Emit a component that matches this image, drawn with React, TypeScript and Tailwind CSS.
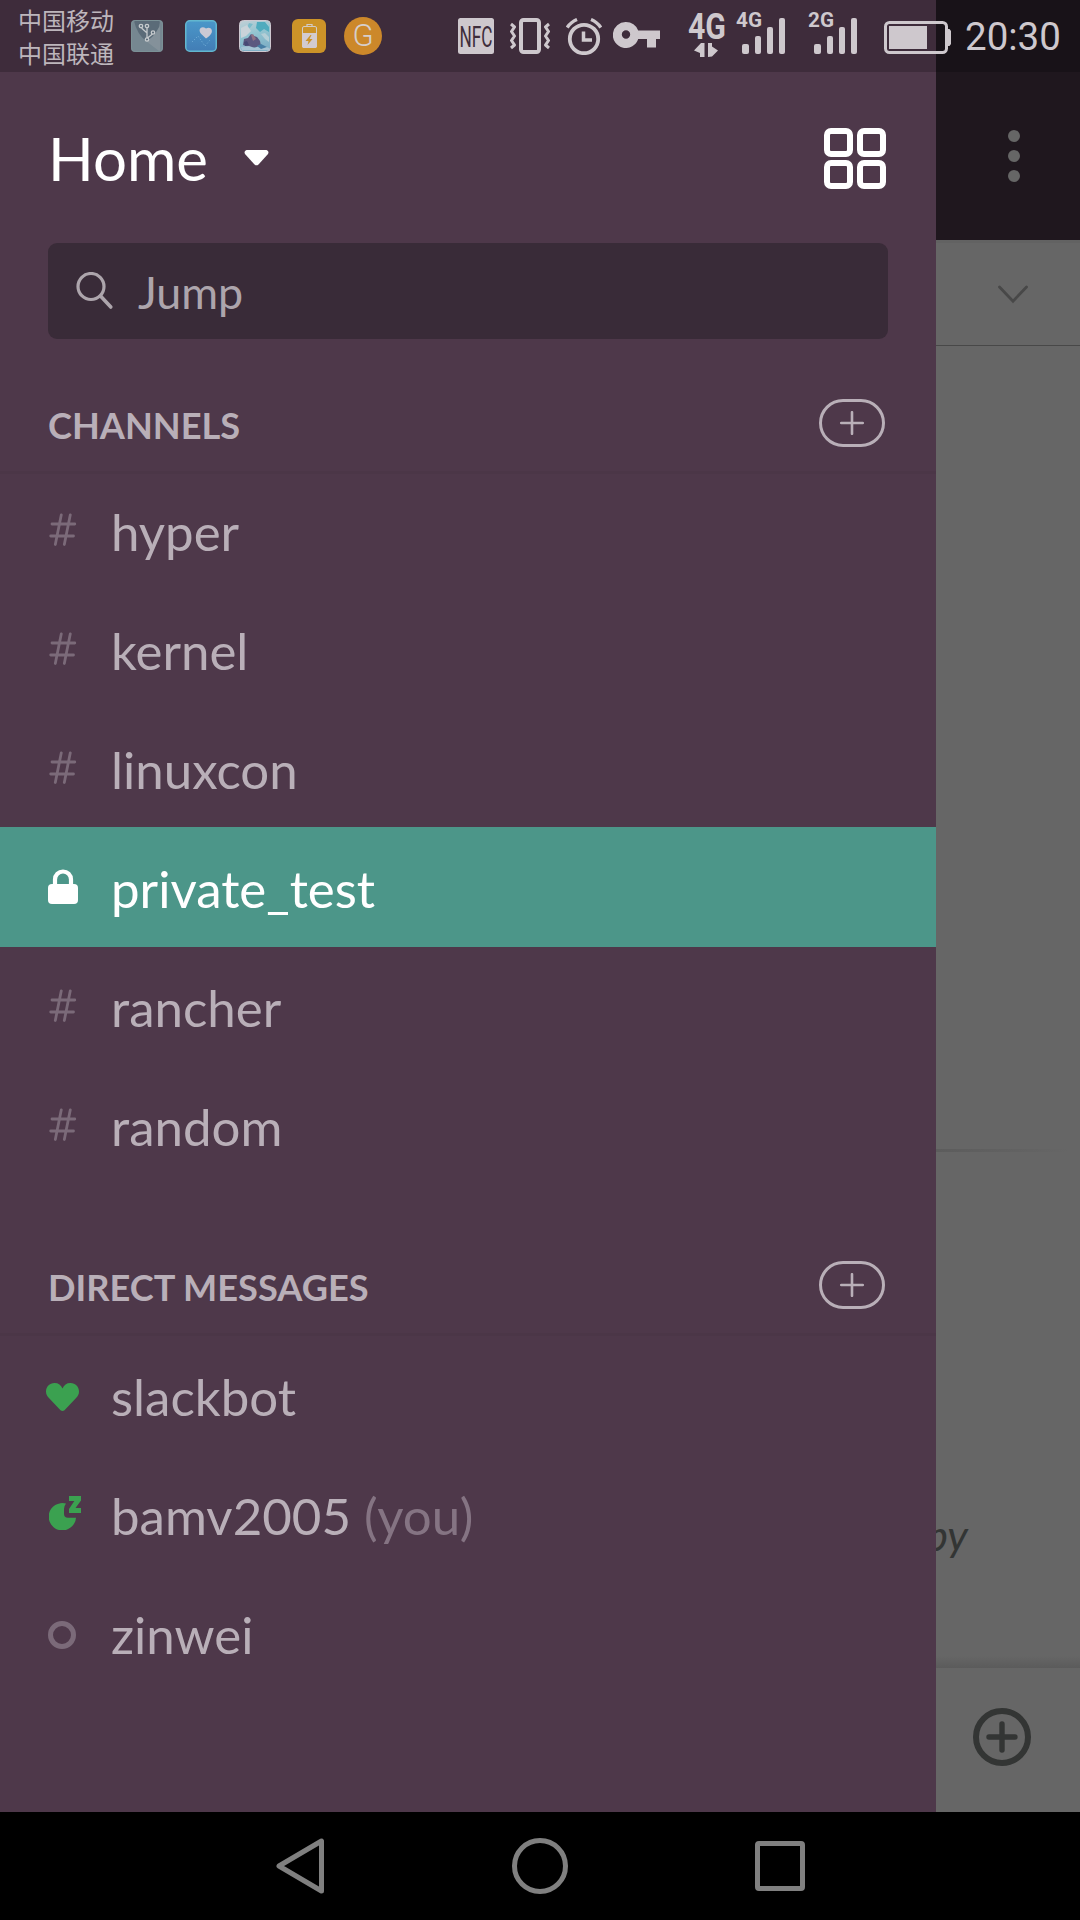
import React from "react";

const LIGHT = "#cec8cd";

function CarrierNames() {
  return (
    <div className="ml-[18px] w-[98px] font-['Noto_Sans_CJK_SC',sans-serif] text-[24px] leading-[33px] whitespace-nowrap text-[#bdb6bc]">
      <div>中国移动</div>
      <div>中国联通</div>
    </div>
  );
}

function UsbIcon() {
  return (
    <svg className="ml-[15px]" width="32" height="32" viewBox="0 0 32 32">
      <rect width="32" height="32" rx="4" fill="#768791" />
      <path d="M3 1h26L28 7Q22 19 15 21Q6 14 3 1Z" fill="#5b6b78" />
      <path d="M15 21Q22 19 29 6v25H28Z" fill="#84919a" />
      <rect x=".5" y=".5" width="31" height="31" rx="4" fill="none" stroke="#7b9196" />
      <g fill="none" stroke="#c6cacd" strokeWidth="1.3">
        <circle cx="10" cy="6" r="1.7" />
        <circle cx="16" cy="6" r="1.7" />
        <circle cx="22" cy="12.500" r="1.7" />
        <circle cx="16" cy="19.500" r="1.7" />
        <path d="M16 8v10M10.500 8l5 4.500M21.500 14l-5 4" />
      </g>
    </svg>
  );
}

function HealthIcon() {
  return (
    <svg className="ml-[22px]" width="32" height="32" viewBox="0 0 32 32">
      <defs>
        <linearGradient id="health" x2="0" y2="1">
          <stop stopColor="#4a97c9" />
          <stop offset="1" stopColor="#427db5" />
        </linearGradient>
      </defs>
      <rect x=".75" y=".75" width="30.500" height="30.500" rx="4" fill="url(#health)" stroke="#62b7cf" strokeWidth="1.500" />
      <path d="M21 18.500l-5-4.800c-3.600-4.500.5-8.400 5-5.200 4.500-2.500 7 1.500 5.500 4.500-1 2-3 4-5.500 5.500Z" fill="#cac9d4" />
      <path d="M7 22l6-6 7 10 5-6" fill="none" stroke="#78b4da" strokeWidth="1" strokeDasharray="1 2" />
    </svg>
  );
}

function GameIcon() {
  return (
    <svg className="ml-[22px]" width="32" height="32" viewBox="0 0 32 32">
      <defs>
        <linearGradient id="sky" x2=".3" y2="1">
          <stop stopColor="#c3d0d6" />
          <stop offset=".5" stopColor="#93c4d0" />
          <stop offset="1" stopColor="#7fb0c6" />
        </linearGradient>
        <filter id="haze">
          <feGaussianBlur stdDeviation=".6" />
        </filter>
      </defs>
      <rect x=".5" y=".5" width="31" height="31" rx="4" fill="url(#sky)" />
      <g filter="url(#haze)">
        <path d="M18 2h8l4 5v5l-5-3-4 3-4-4Z" fill="#4fabbe" />
        <path d="M10 3l4 1-3 4-4 2Z" fill="#7cbccb" />
        <path d="M2 8l6-3 4 6-5 5-5 2Z" fill="#c9d3d9" />
        <path d="M22 14l4-1 4 4v5l-4-3Z" fill="#b4ced6" />
        <path d="M4 25l1-6 4-1 3-4 3 2 3 1 3 4 1 5-9 2Z" fill="#5b587f" />
        <path d="M12 15l2-1 3 5-3 2Z" fill="#8f7184" />
        <path d="M5 22l3-1 2 4-4 1Z" fill="#474a74" />
        <path d="M2 27l8-1 6 2 6-3 8 3v2H3Z" fill="#a6c3d3" />
        <path d="M18 26l4-2 6 3-6 2Z" fill="#477ea5" />
      </g>
      <rect x=".5" y=".5" width="31" height="31" rx="4" fill="none" stroke="#cfc8d0" />
    </svg>
  );
}

function BatteryAppIcon() {
  return (
    <svg className="ml-[21px]" width="34" height="34" viewBox="0 0 34 34">
      <rect width="34" height="34" rx="6" fill="#cc9328" />
      <rect x="10.500" y="7.500" width="14" height="21" rx="1.500" fill="none" stroke="#d2cbc7" strokeWidth="1" />
      <path d="M15 7V5.500h5V7" fill="none" stroke="#d2cbc7" strokeWidth="1.200" />
      <path d="M10 14h15v13a2 2 0 0 1-2 2H12a2 2 0 0 1-2-2Z" fill="#d2cbcf" />
      <path d="M18.500 16l-5 6h3l-1 4 5-6h-3l2-4Z" fill="#cc9328" />
    </svg>
  );
}

function GIcon() {
  return (
    <div className="ml-[18px] flex size-[38px] items-center justify-center rounded-full bg-[#cc882a]">
      <span className="font-[Roboto,sans-serif] text-[31px] leading-[38px] font-light text-[#d6cecb]">G</span>
    </div>
  );
}

function NfcIcon() {
  return (
    <svg className="ml-[76px] overflow-visible" width="36" height="36" viewBox="0 0 36 36">
      <rect width="36" height="36" rx="2.500" fill={LIGHT} />
      <text x="1.500" y="28.500" textLength="33" lengthAdjust="spacingAndGlyphs" fontFamily="Roboto, sans-serif" fontSize="29" fill="#3e2d3b">
        NFC
      </text>
    </svg>
  );
}

function VibrateIcon() {
  return (
    <svg className="ml-[16px]" width="40" height="36" viewBox="0 0 40 36" fill="none" stroke={LIGHT}>
      <rect x="11" y="2" width="18" height="32" rx="2.500" strokeWidth="4" />
      <path d="M1 6l3.500 3-3 4.500 3 4.500-3 4.500 3 4.500-3.500 3M39 6l-3.500 3 3 4.500-3 4.500 3 4.500-3 4.500 3.500 3" strokeWidth="3" strokeLinejoin="round" />
    </svg>
  );
}

function AlarmIcon() {
  return (
    <svg className="ml-[16px]" width="36" height="37" viewBox="0 0 36 37" fill="none" stroke={LIGHT}>
      <circle cx="18" cy="21" r="14.200" strokeWidth="3.800" />
      <path d="M17.500 13.500V22H26" strokeWidth="3.500" />
      <path d="M1.200 9.500Q5 4 11 1.500M34.800 9.500Q31 4 25 1.500" strokeWidth="3.400" />
    </svg>
  );
}

function KeyIcon() {
  return (
    <svg className="mb-[2px] ml-[11px]" width="47" height="26" viewBox="0 0 47 26">
      <path
        fillRule="evenodd"
        d="M13 0a13 13 0 0 1 12.200 8.500H47V17h-4v8.500h-9V17h-8.800A13 13 0 1 1 13 0Zm0 8.300a4.200 4.200 0 1 0 0 8.400 4.200 4.200 0 0 0 0-8.400Z"
        fill={LIGHT}
      />
    </svg>
  );
}

function DataIcon() {
  return (
    <svg className="ml-[28px] overflow-visible" width="40" height="48" viewBox="0 0 40 48">
      <text x="0" y="27" textLength="38" lengthAdjust="spacingAndGlyphs" fontFamily="Roboto, sans-serif" fontWeight="700" fontSize="36" fill={LIGHT}>
        4G
      </text>
      <path d="M13 31h3.500v14H12v-4l-6-2.500ZM20 31h4v3.500l6 4-6 6-4 .5Z" fill={LIGHT} />
    </svg>
  );
}

function Signal({ label, className }: { label: string; className: string }) {
  return (
    <svg className={className} width="50" height="44" viewBox="0 0 50 44" fill={LIGHT}>
      <text x="0" y="17" textLength="26" lengthAdjust="spacingAndGlyphs" fontFamily="Roboto, sans-serif" fontWeight="700" fontSize="20.500">
        {label}
      </text>
      <rect x="6" y="34" width="7" height="10" rx="2" />
      <rect x="19" y="26" width="6" height="18" rx="2" />
      <rect x="31" y="17" width="6" height="27" rx="2" />
      <rect x="43" y="8" width="6" height="36" rx="2" />
    </svg>
  );
}

function Battery() {
  return (
    <svg className="mt-[3px] ml-[26px]" width="67" height="33" viewBox="0 0 67 33">
      <rect x="1.500" y="1.500" width="61" height="30" rx="4" fill="none" stroke={LIGHT} strokeWidth="3" />
      <rect x="5" y="5" width="38" height="23" fill={LIGHT} />
      <path d="M63 8h2.500l1.500 2v13l-1.500 2H63Z" fill={LIGHT} />
    </svg>
  );
}

function StatusBar() {
  return (
    <header className="absolute inset-x-0 top-0 z-10 flex h-[72px] items-center bg-black/20 [&>*]:shrink-0">
      <CarrierNames />
      <UsbIcon />
      <HealthIcon />
      <GameIcon />
      <BatteryAppIcon />
      <GIcon />
      <NfcIcon />
      <VibrateIcon />
      <AlarmIcon />
      <KeyIcon />
      <DataIcon />
      <Signal label="4G" className="mb-[8px] ml-[8px] overflow-visible" />
      <Signal label="2G" className="mb-[8px] ml-[22px] overflow-visible" />
      <Battery />
      <span className="mt-[2px] ml-[14px] font-[Roboto,sans-serif] text-[38.500px] leading-[70px] text-[#cec8cd]">20:30</span>
    </header>
  );
}

function HashIcon() {
  return (
    <svg className="ml-px" width="28" height="34" viewBox="0 0 28 34" fill="none" stroke="#7b6a79" strokeWidth="2.800" strokeLinecap="round">
      <path d="M12.300 1.800L6.300 31.500M21.300 1.800L15.300 31.500M3 11h22.800M1.700 23h22.800" />
    </svg>
  );
}

function LockIcon() {
  return (
    <svg className="mb-px" width="30" height="35" viewBox="0 0 30 35">
      <path d="M7 17v-6.500a8 8 0 0 1 16 0V17" fill="none" stroke="#fff" strokeWidth="4.200" />
      <rect y="15" width="30" height="20" rx="4" fill="#fff" />
    </svg>
  );
}

function HeartIcon() {
  return (
    <svg className="mt-[4px] -ml-0.5" width="33" height="28" viewBox="0 0 33 28">
      <path d="M16.500 5.500C18 2 20.500 0 24.500 0 29.500 0 33 3.800 33 8.500c0 2.700-1.200 4.600-2.700 6.200L18.500 27.200q-2 1.600-4 0L2.700 14.700C1.200 13.100 0 11.200 0 8.500 0 3.800 3.500 0 8.500 0c4 0 6.500 2 8 5.500Z" fill="#3ba150" />
    </svg>
  );
}

function SnoozeIcon() {
  return (
    <svg className="mb-[2px] ml-px" width="33" height="34" viewBox="0 0 33 34" fill="#3ba150">
      <path d="M17 7.500A13.700 13.700 0 1 0 27 21.700H19q-4-.2-4-4V13q0-3 2-5.500Z" />
      <path d="M20 0h12v4.500L26.500 12H32v5H20v-4L25.300 5H20Z" />
    </svg>
  );
}

function OfflineIcon() {
  return <div className="mt-[4px] size-[28px] rounded-full border-[5px] border-[#7b6a79]" />;
}

function Section({ title, className }: { title: string; className: string }) {
  return (
    <div className={"flex justify-between border-b-[3px] border-[#4b3647] pr-[51px] pl-[48px] " + className}>
      <h2 className="mt-[2px] text-[36.200px] leading-[48px] font-bold">{title}</h2>
      <button className="flex h-[48px] w-[66px] items-center justify-center rounded-full border-[3px] border-[#b9afb8]">
        <svg width="24" height="24" viewBox="0 0 24 24" stroke="#b9afb8" strokeWidth="2.600" strokeLinecap="round">
          <path d="M12 1.200v21.600M1.200 12h21.600" />
        </svg>
      </button>
    </div>
  );
}

function Row({ icon, name, note, selected }: { icon: React.ReactNode; name: string; note?: string; selected?: boolean }) {
  return (
    <li className={selected ? "-mb-px flex h-[120px] bg-[#4c9689] pl-[48px] text-white" : "flex h-[119px] pl-[48px]"}>
      <div className="flex h-[120px] w-[63px] items-center">{icon}</div>
      <span className="pt-[31px] text-[51px] leading-[62px] whitespace-pre">
        {name}
        {note && <span className="text-[#857483]"> {note}</span>}
      </span>
    </li>
  );
}

function Drawer() {
  return (
    <aside className="h-full w-[936px] shrink-0 bg-[#4e384a] pt-[72px] text-[#b9afb8]">
      <div className="flex h-[171px] items-start pr-[50px] pl-[48px]">
        <h1 className="mt-[50px] text-[60px] leading-[72px] text-white">Home</h1>
        <svg className="mt-[78px] ml-[36px]" width="25" height="16" viewBox="0 0 25 16">
          <path d="M2.500 0h20q3 1 1.500 4L14.500 14.500q-2 1.700-4 0L1 4Q-.5 1 2.500 0Z" fill="#fff" />
        </svg>
        <div className="mt-[56px] ml-auto grid grid-cols-2 gap-x-[4px] gap-y-[3px]">
          {[0, 1, 2, 3].map((i) => (
            <div key={i} className="size-[29px] rounded-[7px] border-[6px] border-white" />
          ))}
        </div>
      </div>
      <div className="ml-[48px] flex h-[96px] w-[840px] rounded-[9px] bg-[#392b38]">
        <svg className="mt-[29px] ml-[28px]" width="38" height="38" viewBox="0 0 38 38" fill="none" stroke="#ada5ac" strokeLinecap="round">
          <circle cx="15" cy="14.500" r="13" strokeWidth="3.200" />
          <path d="M25 24.500L34.800 35" strokeWidth="3.600" />
        </svg>
        <span className="mt-[22px] ml-[24px] text-[44.800px] leading-[54px] text-[#ada5ac]">Jump</span>
      </div>
      <Section title="CHANNELS" className="mt-[60px] h-[75px]" />
      <ul className="-mt-[4px]">
        <Row icon={<HashIcon />} name="hyper" />
        <Row icon={<HashIcon />} name="kernel" />
        <Row icon={<HashIcon />} name="linuxcon" />
        <Row icon={<LockIcon />} name="private_test" selected />
        <Row icon={<HashIcon />} name="rancher" />
        <Row icon={<HashIcon />} name="random" />
      </ul>
      <Section title="DIRECT MESSAGES" className="mt-[77px] h-[75px]" />
      <ul className="-mt-[1px]">
        <Row icon={<HeartIcon />} name="slackbot" />
        <Row icon={<SnoozeIcon />} name="bamv2005" note="(you)" />
        <Row icon={<OfflineIcon />} name="zinwei" />
      </ul>
    </aside>
  );
}

function DimmedPage() {
  return (
    <main className="flex h-full w-[144px] flex-col overflow-hidden bg-[#666] [&>*]:shrink-0">
      <div className="flex h-[240px] flex-col items-center gap-[8px] bg-[#1f171e] pt-[130px] pl-[12px]">
        <div className="size-[12px] rounded-full bg-[#666]" />
        <div className="size-[12px] rounded-full bg-[#666]" />
        <div className="size-[12px] rounded-full bg-[#666]" />
      </div>
      <div className="h-[106px] border-t-[3px] border-b border-t-[#626262] border-b-[#484848] pt-[41px] pl-[61px]">
        <svg width="32" height="20" viewBox="0 0 32 20" fill="none" stroke="#484848" strokeWidth="2.800" strokeLinecap="round">
          <path d="M2.500 3L16 17.200L29.500 3" />
        </svg>
      </div>
      <div className="flex h-[1322px] flex-col">
        <div className="mt-[803px] h-[3px] w-[134px] bg-linear-to-r from-[#5c5c5c] to-[#666]" />
        <div className="mt-[356px] flex w-[32px] justify-end text-[43px] leading-[54px] text-[#333534] italic">by</div>
        <div className="mt-auto h-[12px] bg-linear-to-b from-[#666] to-[#5b5b5b]" />
      </div>
      <div className="h-[144px] pt-[40px] pl-[37px]">
        <svg width="58" height="58" viewBox="0 0 58 58" fill="none" stroke="#333534" strokeLinecap="round">
          <circle cx="29" cy="29" r="26" strokeWidth="6" />
          <path d="M29 16v26M16 29h26" strokeWidth="5.400" />
        </svg>
      </div>
    </main>
  );
}

function NavBar() {
  return (
    <nav className="flex h-[108px] items-center bg-black">
      <svg className="ml-[276px]" width="48" height="56" viewBox="0 0 48 56" fill="none" stroke="#808080" strokeWidth="5" strokeLinejoin="round">
        <path d="M3 28L45.500 3v50Z" />
      </svg>
      <div className="ml-[188px] size-[56px] rounded-full border-[5px] border-[#808080]" />
      <div className="ml-[187px] size-[50px] rounded-[4px] border-[5px] border-[#808080]" />
    </nav>
  );
}

export default function App() {
  return (
    <div className="relative h-[1920px] w-[1080px] overflow-hidden bg-black font-[Lato,sans-serif]">
      <StatusBar />
      <div className="flex h-[1812px]">
        <Drawer />
        <DimmedPage />
      </div>
      <NavBar />
    </div>
  );
}
